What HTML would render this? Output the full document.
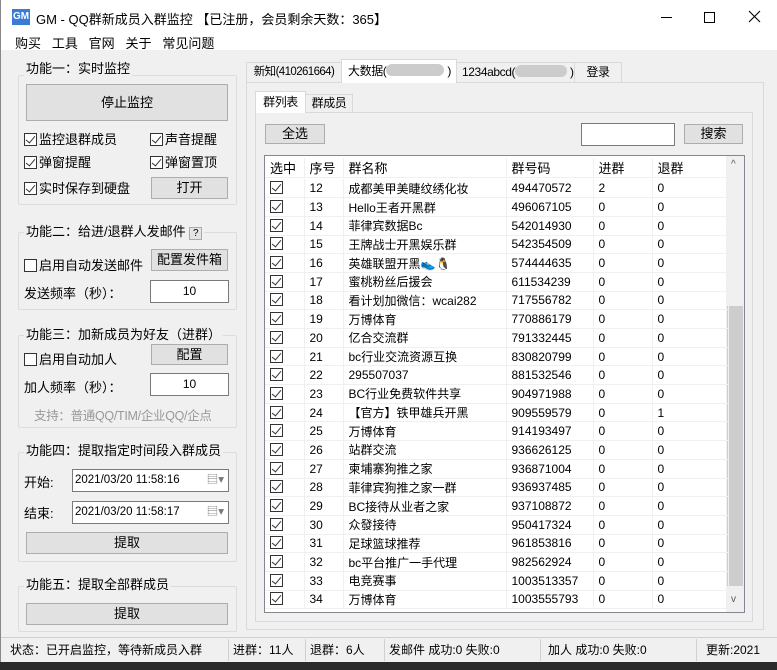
<!DOCTYPE html><html><head><meta charset="utf-8"><style>
*{box-sizing:border-box;margin:0;padding:0}
body{width:777px;height:670px;overflow:hidden;background:#2b2b2b;font-family:"Liberation Sans","Noto Sans CJK SC",sans-serif;font-size:12px;color:#000;position:relative}
.a{position:absolute}
.win{left:0;top:0;width:777px;height:662px;background:#f0f0f0;border-left:1px solid #888}
.btn{position:absolute;background:#e1e1e1;border:1px solid #adadad;text-align:center;font-size:13px;white-space:nowrap}
.gb{position:absolute;border:1px solid #dcdcdc;border-radius:2px}
.gt{position:absolute;background:#f0f0f0;padding:0 2px;font-size:13px;line-height:16px;white-space:nowrap}
.cb{display:inline-block;width:13px;height:13px;border:1px solid #333;background:#fff;vertical-align:-2px;margin-right:2px;position:relative}
.cb.c::after{content:"";position:absolute;left:3px;top:0px;width:4px;height:8px;border:solid #333;border-width:0 1px 1px 0;transform:rotate(40deg)}
.inp{position:absolute;background:#fff;border:1px solid #7a7a7a;text-align:center;line-height:20px;white-space:nowrap}
.t{position:absolute;font-size:13px;white-space:nowrap}
.tab{position:absolute;border:1px solid #d9d9d9;border-bottom:none;background:#f0f0f0;text-align:center;font-size:12px;line-height:19px;white-space:nowrap;overflow:hidden;letter-spacing:-0.4px}
table{border-collapse:collapse;font-size:12px}
td{height:18.7px;padding:0 0 0 5px;border-bottom:1px solid #f0f0f0;border-right:1px solid #f0f0f0;white-space:nowrap}
.sb{position:absolute;top:639px;height:22px;line-height:22px;font-size:12px;border-right:1px solid #d0d0d0;padding-left:3px;white-space:nowrap}
</style></head><body>
<div class="a win">
<div class="a" style="left:0;top:0;width:777px;height:50px;background:#fff"></div>
<div class="a" style="left:11px;top:9px;width:18px;height:16px;background:#3a7bd5;color:#fff;font-size:10px;font-weight:bold;text-align:center;line-height:16px">GM</div>
<div class="t" style="left:35px;top:9px;font-size:13px">GM - QQ群新成员入群监控 【已注册，会员剩余天数：365】</div>
<svg class="a" style="left:650px;top:5px" width="120" height="25"><line x1="10" y1="12.5" x2="21" y2="12.5" stroke="#000"/><rect x="53.5" y="7.5" width="10" height="10" fill="none" stroke="#000"/><path d="M98 6 L109 17 M109 6 L98 17" stroke="#000" stroke-width="1.1"/></svg>
<div class="t" style="left:14px;top:33px">购买&nbsp;&nbsp; 工具&nbsp;&nbsp; 官网&nbsp;&nbsp; 关于&nbsp;&nbsp; 常见问题</div>

<div class="gb" style="left:17px;top:75px;width:219px;height:130px"></div><div class="gt" style="left:23px;top:61px">功能一：实时监控</div>
<div class="btn" style="left:25px;top:84px;width:202px;height:37px;line-height:35px">停止监控</div>
<div class="t" style="left:23px;top:129px"><span class="cb c"></span>监控退群成员</div>
<div class="t" style="left:149px;top:129px"><span class="cb c"></span>声音提醒</div>
<div class="t" style="left:23px;top:152px"><span class="cb c"></span>弹窗提醒</div>
<div class="t" style="left:149px;top:152px"><span class="cb c"></span>弹窗置顶</div>
<div class="t" style="left:23px;top:178px"><span class="cb c"></span>实时保存到硬盘</div>
<div class="btn" style="left:150px;top:177px;width:77px;height:22px;line-height:20px">打开</div>

<div class="gb" style="left:17px;top:232px;width:219px;height:78px"></div><div class="gt" style="left:23px;top:224px">功能二：给进/退群人发邮件 <span style="display:inline-block;width:13px;height:13px;border:1px solid #aaa;background:#e4e4e4;font-size:10px;line-height:11px;text-align:center">?</span></div>
<div class="t" style="left:23px;top:255px"><span class="cb"></span>启用自动发送邮件</div>
<div class="btn" style="left:150px;top:249px;width:77px;height:22px;line-height:20px">配置发件箱</div>
<div class="t" style="left:23px;top:283px">发送频率（秒）：</div>
<div class="inp" style="left:149px;top:280px;width:79px;height:23px">10</div>

<div class="gb" style="left:17px;top:335px;width:219px;height:93px"></div><div class="gt" style="left:23px;top:327px">功能三：加新成员为好友（进群）</div>
<div class="t" style="left:23px;top:349px"><span class="cb"></span>启用自动加人</div>
<div class="btn" style="left:150px;top:344px;width:77px;height:21px;line-height:19px">配置</div>
<div class="t" style="left:23px;top:377px">加人频率（秒）：</div>
<div class="inp" style="left:149px;top:373px;width:79px;height:23px">10</div>
<div class="t" style="left:33px;top:405px;color:#999;font-size:12.5px;letter-spacing:-0.3px">支持：普通QQ/TIM/企业QQ/企点</div>

<div class="gb" style="left:17px;top:452px;width:219px;height:110px"></div><div class="gt" style="left:23px;top:443px">功能四：提取指定时间段入群成员</div>
<div class="t" style="left:23px;top:472px">开始:</div>
<div class="inp" style="left:71px;top:469px;width:157px;height:23px;text-align:left;padding-left:2px;font-size:11.5px">2021/03/20 11:58:16<span style="position:absolute;right:4px;color:#777">▤▾</span></div>
<div class="t" style="left:23px;top:503px">结束:</div>
<div class="inp" style="left:71px;top:501px;width:157px;height:23px;text-align:left;padding-left:2px;font-size:11.5px">2021/03/20 11:58:17<span style="position:absolute;right:4px;color:#777">▤▾</span></div>
<div class="btn" style="left:25px;top:532px;width:202px;height:22px;line-height:20px">提取</div>

<div class="gb" style="left:17px;top:586px;width:219px;height:46px"></div><div class="gt" style="left:23px;top:577px">功能五：提取全部群成员</div>
<div class="btn" style="left:25px;top:603px;width:202px;height:22px;line-height:20px">提取</div>

<div class="a" style="left:245px;top:82px;width:518px;height:548px;border:1px solid #d9d9d9;background:#f0f0f0"></div>
<div class="tab" style="left:245px;top:62px;width:96px;height:20px;letter-spacing:-0.6px;font-size:11.5px">新知(410261664)</div>
<div class="tab" style="left:340px;top:59px;width:116px;height:24px;background:#fff;text-align:left;padding-left:6px;line-height:22px">大数据(<span style="display:inline-block;width:58px;height:12px;background:#ccc;border-radius:6px;vertical-align:-1px"></span>&nbsp;)</div>
<div class="tab" style="left:455px;top:62px;width:119px;height:20px;text-align:left;padding-left:5px">1234abcd(<span style="display:inline-block;width:52px;height:12px;background:#ccc;border-radius:6px;vertical-align:-1px"></span>&nbsp;)</div>
<div class="tab" style="left:573px;top:62px;width:48px;height:20px">登录</div>
<div class="a" style="left:254px;top:112px;width:498px;height:510px;border:1px solid #d9d9d9;background:#f0f0f0"></div>
<div class="tab" style="left:254px;top:91px;width:51px;height:22px;background:#fff;line-height:21px">群列表</div>
<div class="tab" style="left:304px;top:94px;width:48px;height:18px;line-height:17px">群成员</div>
<div class="btn" style="left:264px;top:124px;width:60px;height:20px;line-height:18px">全选</div>
<div class="inp" style="left:580px;top:123px;width:94px;height:23px"></div>
<div class="btn" style="left:683px;top:124px;width:59px;height:20px;line-height:18px">搜索</div>

<div class="a" style="left:263px;top:155px;width:481px;height:458px;border:1px solid #828790;background:#fff;overflow:hidden">
<table style="position:absolute;left:0;top:2px">
<tr style="font-size:13px"><td style="width:39px">选中</td><td style="width:39px">序号</td><td style="width:163px">群名称</td><td style="width:87px">群号码</td><td style="width:59px">进群</td><td style="width:76px">退群</td></tr>
</table>
<div class="a" style="left:461px;top:0;width:18px;height:456px;background:#f0f0f0">
<div class="a" style="left:5px;top:3px;font-size:10px;color:#555">^</div>
<div class="a" style="left:1px;top:150px;width:16px;height:280px;background:#cdcdcd"></div>
<div class="a" style="left:5px;top:438px;font-size:10px;color:#555">v</div>
</div>
<table style="position:absolute;left:0;top:23px">
<tr><td style="width:39px"><span class="cb c"></span></td><td style="width:39px">12</td><td style="width:163px">成都美甲美睫纹绣化妆</td><td style="width:87px">494470572</td><td style="width:59px">2</td><td style="width:76px">0</td></tr>
<tr><td><span class="cb c"></span></td><td>13</td><td>Hello王者开黑群</td><td>496067105</td><td>0</td><td>0</td></tr>
<tr><td><span class="cb c"></span></td><td>14</td><td>菲律宾数据Bc</td><td>542014930</td><td>0</td><td>0</td></tr>
<tr><td><span class="cb c"></span></td><td>15</td><td>王牌战士开黑娱乐群</td><td>542354509</td><td>0</td><td>0</td></tr>
<tr><td><span class="cb c"></span></td><td>16</td><td>英雄联盟开黑👟🐧</td><td>574444635</td><td>0</td><td>0</td></tr>
<tr><td><span class="cb c"></span></td><td>17</td><td>蜜桃粉丝后援会</td><td>611534239</td><td>0</td><td>0</td></tr>
<tr><td><span class="cb c"></span></td><td>18</td><td>看计划加微信：wcai282</td><td>717556782</td><td>0</td><td>0</td></tr>
<tr><td><span class="cb c"></span></td><td>19</td><td>万博体育</td><td>770886179</td><td>0</td><td>0</td></tr>
<tr><td><span class="cb c"></span></td><td>20</td><td>亿合交流群</td><td>791332445</td><td>0</td><td>0</td></tr>
<tr><td><span class="cb c"></span></td><td>21</td><td>bc行业交流资源互换</td><td>830820799</td><td>0</td><td>0</td></tr>
<tr><td><span class="cb c"></span></td><td>22</td><td>295507037</td><td>881532546</td><td>0</td><td>0</td></tr>
<tr><td><span class="cb c"></span></td><td>23</td><td>BC行业免费软件共享</td><td>904971988</td><td>0</td><td>0</td></tr>
<tr><td><span class="cb c"></span></td><td>24</td><td>【官方】铁甲雄兵开黑</td><td>909559579</td><td>0</td><td>1</td></tr>
<tr><td><span class="cb c"></span></td><td>25</td><td>万博体育</td><td>914193497</td><td>0</td><td>0</td></tr>
<tr><td><span class="cb c"></span></td><td>26</td><td>站群交流</td><td>936626125</td><td>0</td><td>0</td></tr>
<tr><td><span class="cb c"></span></td><td>27</td><td>柬埔寨狗推之家</td><td>936871004</td><td>0</td><td>0</td></tr>
<tr><td><span class="cb c"></span></td><td>28</td><td>菲律宾狗推之家一群</td><td>936937485</td><td>0</td><td>0</td></tr>
<tr><td><span class="cb c"></span></td><td>29</td><td>BC接待从业者之家</td><td>937108872</td><td>0</td><td>0</td></tr>
<tr><td><span class="cb c"></span></td><td>30</td><td>众發接待</td><td>950417324</td><td>0</td><td>0</td></tr>
<tr><td><span class="cb c"></span></td><td>31</td><td>足球篮球推荐</td><td>961853816</td><td>0</td><td>0</td></tr>
<tr><td><span class="cb c"></span></td><td>32</td><td>bc平台推广一手代理</td><td>982562924</td><td>0</td><td>0</td></tr>
<tr><td><span class="cb c"></span></td><td>33</td><td>电竞赛事</td><td>1003513357</td><td>0</td><td>0</td></tr>
<tr><td><span class="cb c"></span></td><td>34</td><td>万博体育</td><td>1003555793</td><td>0</td><td>0</td></tr>
</table>
</div>

<div class="a" style="left:0;top:637px;width:777px;height:1px;background:#d0d0d0"></div>
<div class="sb" style="left:6px;width:222px">状态：已开启监控，等待新成员入群</div>
<div class="sb" style="left:229px;width:76px">进群：11人</div>
<div class="sb" style="left:306px;width:78px">退群：6人</div>
<div class="sb" style="left:385px;width:155px">发邮件 成功:0 失败:0</div>
<div class="sb" style="left:541px;width:155px;padding-left:6px">加人 成功:0 失败:0</div>
<div class="sb" style="left:697px;width:80px;border:none;padding-left:8px">更新:2021</div>
</div>
</body></html>
